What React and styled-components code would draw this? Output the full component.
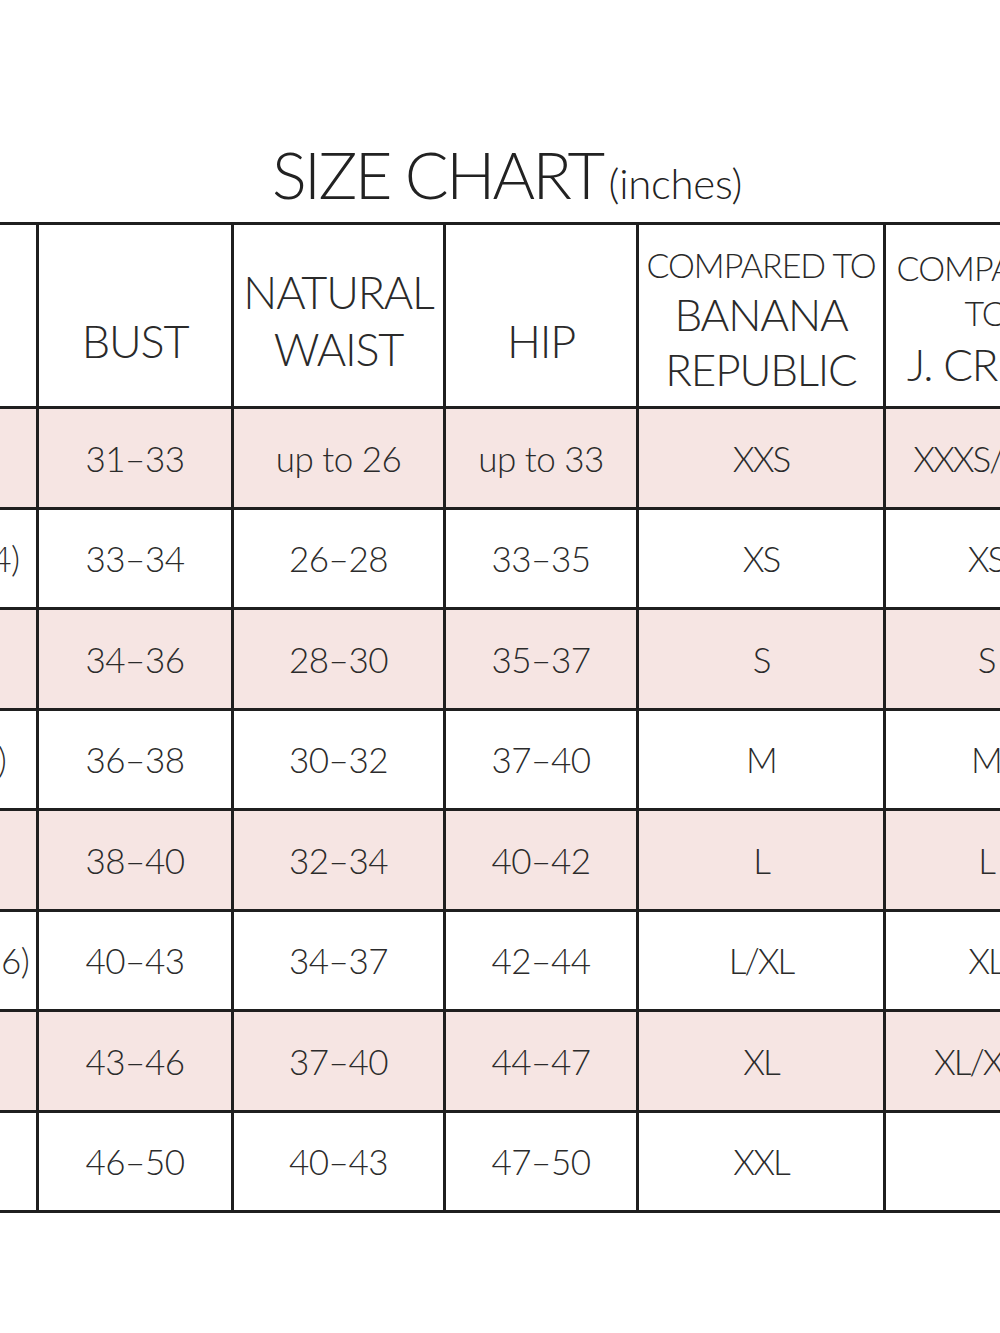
import React from "react";
import styled, { createGlobalStyle } from "styled-components";

const Global = createGlobalStyle`
  html, body { margin: 0; padding: 0; background: #ffffff; }
  body { font-family: "Lato", "Open Sans", sans-serif; overflow: hidden; }
`;

const Page = styled.div`
  width: 1000px;
  height: 1333px;
  overflow: hidden;
  background: #fff;
  display: flex;
  flex-direction: column;
`;

const TitleRow = styled.h1`
  margin: 0;
  padding: 142px 0 0 14px;
  height: 222px;
  box-sizing: border-box;
  display: flex;
  justify-content: center;
  align-items: baseline;
  font-weight: 300;
  color: #222;
  line-height: 1;
  flex-shrink: 0;
`;

const TitleMain = styled.span`
  font-size: 65px;
  letter-spacing: -2.6px;
`;

const TitleSub = styled.span`
  font-size: 42px;
  margin-left: 6px;
  letter-spacing: -0.3px;
`;

const Grid = styled.div`
  margin-left: -143px;
  width: max-content;
  display: grid;
  grid-template-columns: 176px 192px 209px 190px 244px 200px;
  grid-template-rows: 181px repeat(8, 97.5px);
  gap: 3px;
  padding: 3px;
  background: #1f1f1f;
`;

const HeadCell = styled.div`
  background: #fff;
  display: flex;
  flex-direction: column;
  align-items: center;
  justify-content: center;
  padding-top: ${(p) => p.$shift || 0}px;
  box-sizing: border-box;
  color: #2a2a2a;
  font-weight: 300;
  text-align: center;
  white-space: nowrap;
`;

const HeadLine = styled.span`
  display: block;
  font-size: ${(p) => p.$size || 45}px;
  line-height: ${(p) => p.$lh || 1.2};
  letter-spacing: ${(p) => p.$ls ?? -1.2}px;
`;

const Cell = styled.div`
  background: ${(p) => (p.$pink ? "#f6e5e3" : "#ffffff")};
  display: flex;
  align-items: center;
  justify-content: center;
  font-size: 35px;
  font-weight: 300;
  color: #2b2b2b;
  white-space: nowrap;
  letter-spacing: ${(p) => p.$ls ?? -0.5}px;
`;

const rows = [
  ["XXS", "31–33", "up to 26", "up to 33", "XXS", "XXXS/XXS"],
  ["XS (2 – 4)", "33–34", "26–28", "33–35", "XS", "XS"],
  ["S", "34–36", "28–30", "35–37", "S", "S"],
  ["M (6–8)", "36–38", "30–32", "37–40", "M", "M"],
  ["L", "38–40", "32–34", "40–42", "L", "L"],
  ["XL (14–16)", "40–43", "34–37", "42–44", "L/XL", "XL"],
  ["1X", "43–46", "37–40", "44–47", "XL", "XL/XXL"],
  ["2X", "46–50", "40–43", "47–50", "XXL", ""],
];

export default function App() {
  return (
    <Page>
      <Global />
      <TitleRow>
        <TitleMain>SIZE CHART</TitleMain>
        <TitleSub>(inches)</TitleSub>
      </TitleRow>
      <Grid>
        <HeadCell $shift={50}>
          <HeadLine>SIZE</HeadLine>
        </HeadCell>
        <HeadCell $shift={50}>
          <HeadLine>BUST</HeadLine>
        </HeadCell>
        <HeadCell $shift={10}>
          <HeadLine $lh={1.25}>NATURAL</HeadLine>
          <HeadLine $lh={1.25}>WAIST</HeadLine>
        </HeadCell>
        <HeadCell $shift={50}>
          <HeadLine>HIP</HeadLine>
        </HeadCell>
        <HeadCell $shift={8}>
          <HeadLine $size={34} $lh={1.35} $ls={-1}>COMPARED TO</HeadLine>
          <HeadLine $size={44} $lh={1.25}>BANANA</HeadLine>
          <HeadLine $size={44} $lh={1.25}>REPUBLIC</HeadLine>
        </HeadCell>
        <HeadCell $shift={8}>
          <HeadLine $size={34} $lh={1.25} $ls={-1}>COMPARED</HeadLine>
          <HeadLine $size={34} $lh={1.4} $ls={-1}>TO</HeadLine>
          <HeadLine $size={44} $lh={1.25}>J. CREW</HeadLine>
        </HeadCell>
        {rows.map((r, i) =>
          r.map((v, j) => (
            <Cell key={`${i}-${j}`} $pink={i % 2 === 0} $ls={j >= 4 ? -2 : -0.5}>
              {v}
            </Cell>
          ))
        )}
      </Grid>
    </Page>
  );
}
